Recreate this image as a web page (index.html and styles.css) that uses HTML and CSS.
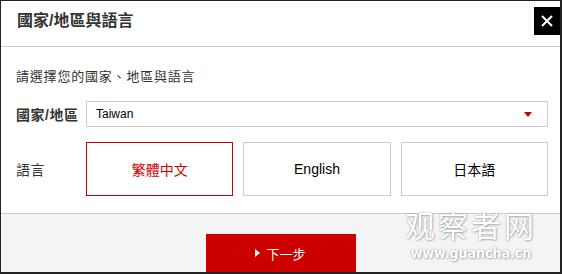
FILE: index.html
```html
<!DOCTYPE html>
<html lang="zh-Hant">
<head>
    <meta charset="UTF-8" />
    <title>國家/地區與語言</title>
    <meta name="viewport" content="width=device-width, initial-scale=1.0" />
    <link rel="stylesheet" href="styles.css">
</head>
<body>
    <div class="modal">
        <div class="modal-header">
            <h2>國家/地區與語言</h2>
            <button class="close-btn" aria-label="關閉">
                <svg width="12" height="12" viewBox="0 0 12 12">
                    <path d="M1 1 L11 11 M11 1 L1 11" stroke="#fff" stroke-width="2" />
                </svg>
            </button>
        </div>

        <div class="modal-body">
            <p class="intro">請選擇您的國家、地區與語言</p>

            <div class="form-row">
                <label class="row-label">國家/地區</label>
                <div class="select-box">
                    <span>Taiwan</span>
                    <i class="caret"></i>
                </div>
            </div>

            <div class="form-row lang-row">
                <label class="row-label">語言</label>
                <div class="lang-options">
                    <button class="lang-btn active">繁體中文</button>
                    <button class="lang-btn latin">English</button>
                    <button class="lang-btn">日本語</button>
                </div>
            </div>
        </div>

        <div class="modal-footer">
            <button class="next-btn"><i class="arrow"></i>下一步</button>
        </div>

        <!-- site watermark -->
        <div class="watermark">
            <div class="wm-cn">观察者网</div>
            <div class="wm-url">www.guancha.cn</div>
        </div>
    </div>
</body>
</html>
```

FILE: styles.css
```css
:root {
    --text-color: #333;
    --line-color: #ccc;
    --red: #cc0000;
    --footer-bg: #f4f4f4;
}

body {
    margin: 0;
    font-family: "Liberation Sans", "Noto Sans CJK TC", sans-serif;
    color: var(--text-color);
}

.modal {
    position: relative; /* for the watermark */
    width: 562px;
    height: 274px;
    box-sizing: border-box;
    background: #fff;
    border: solid #222;
    border-width: 1px 2px 2px 1px;
    overflow: hidden;
}

.modal-header {
    display: flex;
    justify-content: space-between;
    align-items: center;
    padding: 6px 0 11px 16px;
    border-bottom: 1px solid var(--line-color);
}

.modal-header h2 {
    margin: 0;
    font-size: 16px;
    font-weight: 700;
    line-height: 28px;
    color: #333;
}

.close-btn {
    width: 26px;
    height: 28px;
    padding: 0;
    border: none;
    background: #000;
    display: flex;
    align-items: center;
    justify-content: center;
}

.modal-body {
    padding: 20px 12px 17px 15px;
}

.intro {
    margin: 0 0 14px;
    font-size: 13px;
    line-height: 20px;
    letter-spacing: 0.8px;
}

.form-row {
    display: grid;
    grid-template-columns: 70px 1fr;
    align-items: center;
}

.row-label {
    font-size: 14px;
    font-weight: 700;
    letter-spacing: 0.5px;
}

.lang-row {
    margin-top: 15px;
}

.lang-row .row-label {
    font-weight: 400;
}

.select-box {
    display: flex;
    justify-content: space-between;
    align-items: center;
    height: 26px;
    box-sizing: border-box;
    padding: 0 15px 0 9px;
    border: 1px solid var(--line-color);
    font-size: 12px;
    color: #000;
}

.caret {
    width: 0;
    height: 0;
    border-left: 4px solid transparent;
    border-right: 4px solid transparent;
    border-top: 5px solid var(--red);
}

.lang-options {
    display: grid;
    grid-template-columns: repeat(3, 1fr);
    gap: 10px;
}

.lang-btn {
    height: 54px;
    padding: 0;
    background: #fff;
    border: 1px solid var(--line-color);
    font-family: "Noto Sans CJK TC", sans-serif;
    font-size: 14px;
    color: #000;
}

.lang-btn.latin {
    font-family: "Liberation Sans", sans-serif;
}

.lang-btn.active {
    border-color: var(--red);
    color: var(--red);
}

.modal-footer {
    display: flex;
    justify-content: center;
    padding-top: 20px;
    height: 100%;
    background: var(--footer-bg);
    border-top: 1px solid var(--line-color);
}

.next-btn {
    display: flex;
    align-items: center;
    justify-content: center;
    gap: 6px;
    width: 150px;
    height: 38px;
    padding: 0;
    border: none;
    background: var(--red);
    color: #fff;
    font-family: "Noto Sans CJK TC", sans-serif;
    font-size: 13px;
}

.arrow {
    width: 0;
    height: 0;
    border-top: 4px solid transparent;
    border-bottom: 4px solid transparent;
    border-left: 5px solid #fff;
}

.watermark {
    position: absolute;
    left: 404px;
    top: 208px;
    color: #fff;
    text-align: center;
    text-shadow: 0 0 2px rgba(0, 0, 0, 0.35), 1px 1px 2px rgba(0, 0, 0, 0.2);
    pointer-events: none;
}

.wm-cn {
    font-family: "Noto Sans CJK SC", sans-serif;
    font-size: 30px;
    line-height: 30px;
    letter-spacing: 3px;
}

.wm-url {
    margin-top: 7px;
    font-family: "DejaVu Sans Condensed", sans-serif;
    font-weight: 700;
    font-size: 14px;
    line-height: 14px;
    letter-spacing: 0;
}
```
